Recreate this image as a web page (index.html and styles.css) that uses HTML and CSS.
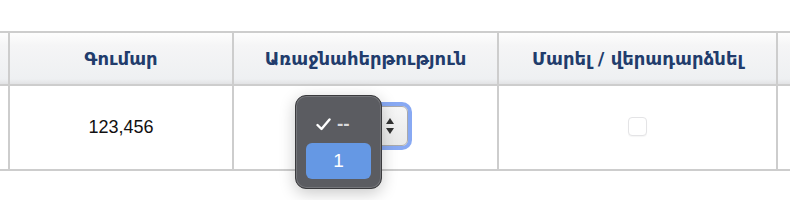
FILE: index.html
```html
<!DOCTYPE html>
<html lang="hy">
<head>
  <meta charset="UTF-8" />
  <meta name="viewport" content="width=device-width, initial-scale=1.0" />
  <title>Վճարումներ</title>
  <link rel="stylesheet" href="styles.css">
</head>
<body>
  <div class="grid">
    <div class="head"></div>
    <div class="head">Գումար</div>
    <div class="head">Առաջնահերթություն</div>
    <div class="head">Մարել / վերադարձնել</div>
    <div class="head"></div>

    <div class="cell"></div>
    <div class="cell amount">123,456</div>
    <div class="cell priority">
      <div class="select">
        <svg class="arrows" width="10" height="18" viewBox="0 0 10 18">
          <path d="M5 1 L9 7 L1 7 Z" fill="#333"/>
          <path d="M5 17 L9 11 L1 11 Z" fill="#333"/>
        </svg>
      </div>
      <div class="menu">
        <div class="option checked">
          <svg class="check" width="15" height="13" viewBox="0 0 15 13">
            <path d="M1.5 7 L5.5 11 L13.5 1.5" fill="none" stroke="#fff" stroke-width="2.4" stroke-linecap="round" stroke-linejoin="round"/>
          </svg>
          <span>--</span>
        </div>
        <div class="option active">1</div>
      </div>
    </div>
    <div class="cell mark">
      <span class="checkbox"></span>
    </div>
    <div class="cell"></div>
  </div>
</body>
</html>
```

FILE: styles.css
```css
html, body {
  min-height: 200px;
}
body {
  margin: 0;
  padding-top: 31px;
  box-sizing: border-box;
  background: #fff;
  font-family: "Liberation Sans", Arial, sans-serif;
}
.grid {
  width: 790px;
  display: grid;
  grid-template-columns: 8px 222px 263px 277px 12px;
  grid-template-rows: 51px 83px;
  column-gap: 2px;
  row-gap: 2px;
  padding: 2px 0;
  background: #cdcdcd;
}
.head {
  background: linear-gradient(to bottom, #fdfdfd 0%, #f5f5f6 25%, #eef0f2 90%, #e2e3e5 100%);
  display: flex;
  align-items: center;
  justify-content: center;
  font-family: "DejaVu Sans", sans-serif;
  font-weight: bold;
  font-size: 18px;
  color: #213c6c;
}
.cell {
  background: #fff;
  display: flex;
  align-items: center;
  justify-content: center;
}
.amount {
  font-size: 18px;
  color: #111;
}
.priority {
  position: relative;
  z-index: 2;
}
.select {
  width: 84px;
  height: 40px;
  box-sizing: border-box;
  border: 1px solid #a9a9ab;
  border-radius: 6px;
  background: linear-gradient(to bottom, #f7f7f7, #e9e9e9);
  box-shadow: 0 0 0 4px #88a9f3;
  display: flex;
  align-items: center;
  justify-content: flex-end;
  padding-right: 12px;
  margin-left: 1px;
  margin-top: -3px;
}
.menu {
  position: absolute;
  z-index: 5;
  left: 61px;
  top: 9px;
  width: 87px;
  height: 94px;
  box-sizing: border-box;
  background: #5b5c61;
  border: 1px solid #3a3a3d;
  border-radius: 11px;
  box-shadow: inset 0 0 0 1px #75767a, 0 4px 16px rgba(0, 0, 0, 0.22);
  padding: 0 10px;
  font-size: 19px;
  color: #fff;
}
.option {
  display: flex;
  align-items: center;
}
.checked {
  height: 46px;
  padding-left: 10px;
  padding-top: 10px;
  box-sizing: border-box;
  color: #d9d9dc;
  font-weight: bold;
}
.checked span {
  margin-left: 6px;
}
.active {
  height: 36px;
  justify-content: center;
  background: #6598e4;
  border-radius: 6px;
  margin-top: 1px;
}
.checkbox {
  width: 19px;
  height: 19px;
  box-sizing: border-box;
  border: 1px solid #e4e4e6;
  border-radius: 4px;
  background: #fff;
  box-shadow: 0 1px 1px rgba(0, 0, 0, 0.04);
  margin-top: -3px;
}
```
